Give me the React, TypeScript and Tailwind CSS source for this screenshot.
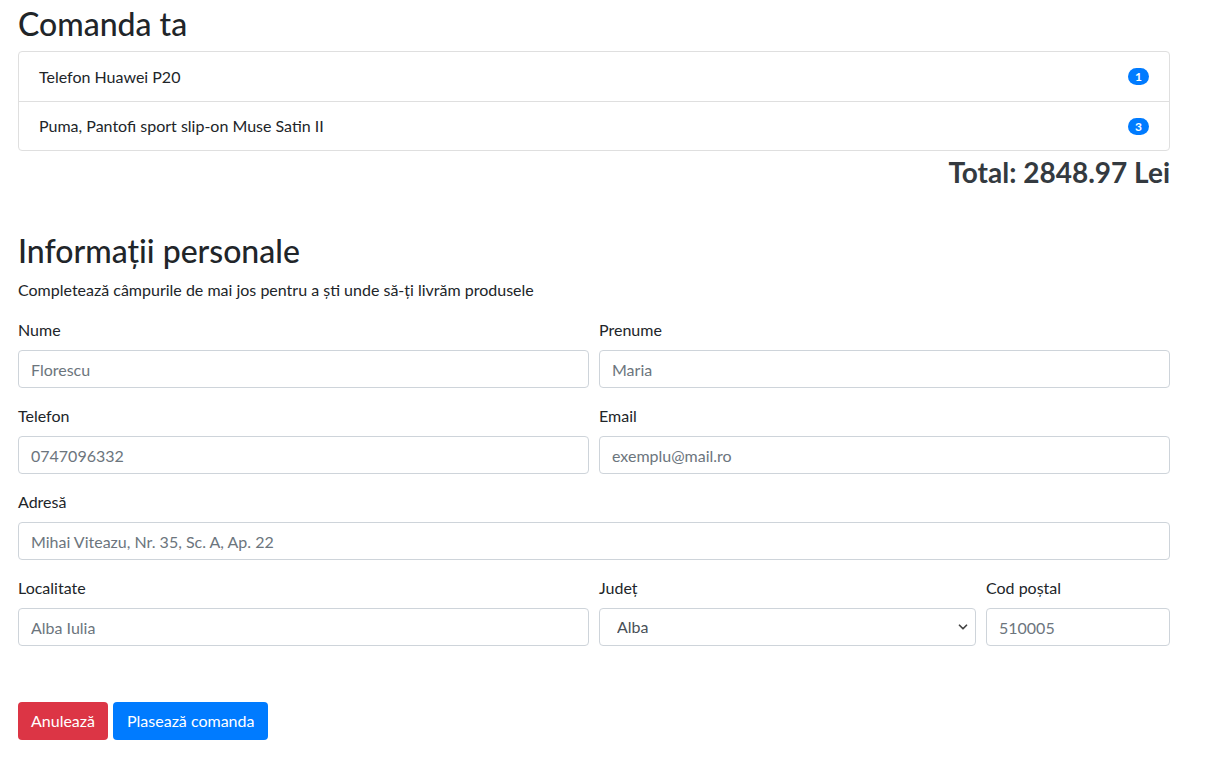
import { ChevronDown } from "lucide-react";

const items = [
  { name: "Telefon Huawei P20", qty: 1 },
  { name: "Puma, Pantofi sport slip-on Muse Satin II", qty: 3 },
];

function Field({ label, placeholder }: { label: string; placeholder: string }) {
  return (
    <div className="mb-4 flex flex-col">
      <label className="mb-2 leading-6">{label}</label>
      <input
        placeholder={placeholder}
        className="h-[38px] w-full rounded border border-[#ced4da] px-3 text-[#495057] placeholder:text-[#6c757d] outline-none"
      />
    </div>
  );
}

export default function App() {
  return (
    <div
      className="min-h-screen bg-white px-[18px] text-base text-[#212529]"
      style={{ fontFamily: "Lato, 'Noto Sans', sans-serif" }}
    >
      <div className="w-[1152px]">
        <h2 className="mb-2 pt-[5px] text-[32px] font-medium leading-[1.2]">Comanda ta</h2>
        <ul className="rounded border border-[#dfdfdf]">
          {items.map((it, i) => (
            <li
              key={it.name}
              className={`flex h-[49px] items-center justify-between px-5 ${i > 0 ? "border-t border-[#dfdfdf]" : ""}`}
            >
              <span>{it.name}</span>
              <span className="rounded-full bg-[#007bff] px-[7px] text-[12px] font-bold leading-[17px] text-white">
                {it.qty}
              </span>
            </li>
          ))}
        </ul>
        <h3 className="mt-[5px] text-right text-[28px] font-bold leading-[1.2] text-[#343a40]">
          Total: 2848.97 Lei
        </h3>

        <h2 className="mb-2 mt-[42px] text-[32px] font-medium leading-[1.2]">Informații personale</h2>
        <p className="mb-4 leading-6">
          Completează câmpurile de mai jos pentru a ști unde să-ți livrăm produsele
        </p>

        <div className="grid grid-cols-2 gap-x-[10px]">
          <Field label="Nume" placeholder="Florescu" />
          <Field label="Prenume" placeholder="Maria" />
          <Field label="Telefon" placeholder="0747096332" />
          <Field label="Email" placeholder="exemplu@mail.ro" />
        </div>
        <Field label="Adresă" placeholder="Mihai Viteazu, Nr. 35, Sc. A, Ap. 22" />
        <div className="grid grid-cols-[571px_377px_1fr] gap-x-[10px]">
          <Field label="Localitate" placeholder="Alba Iulia" />
          <div className="mb-4 flex flex-col">
            <label className="mb-2 leading-6">Județ</label>
            <div className="relative">
              <select className="h-[38px] w-full appearance-none rounded border border-[#ced4da] bg-white pl-[17px] text-[#495057] outline-none">
                <option>Alba</option>
              </select>
              <ChevronDown
                className="pointer-events-none absolute right-[6px] top-[12px] h-[14px] w-[14px] text-[#444]"
                strokeWidth={3}
              />
            </div>
          </div>
          <Field label="Cod poștal" placeholder="510005" />
        </div>

        <div className="mt-10 flex gap-[5px]">
          <button className="h-[38px] rounded bg-[#dc3545] px-[13px] text-white">Anulează</button>
          <button className="h-[38px] rounded bg-[#007bff] px-[14px] text-white">Plasează comanda</button>
        </div>
      </div>
    </div>
  );
}
